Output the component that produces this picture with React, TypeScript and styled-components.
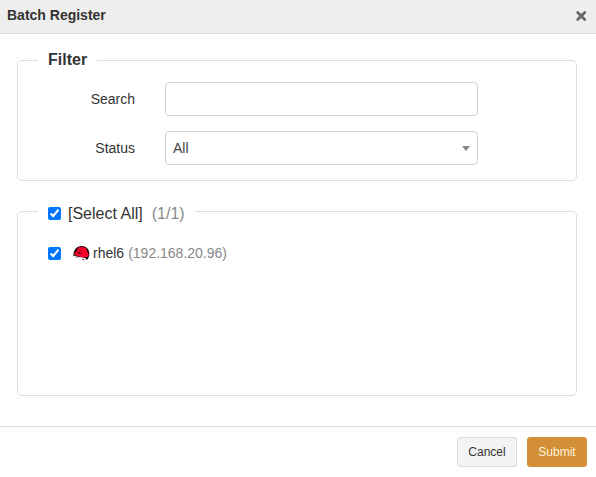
import { useState } from "react";
import styled, { createGlobalStyle } from "styled-components";

const GlobalStyle = createGlobalStyle`
  *, *::before, *::after { box-sizing: border-box; }
  body {
    margin: 0;
    background: #fff;
    color: #333;
    font: 14px/20px "Liberation Sans", Arial, sans-serif;
  }
`;

const Header = styled.header`
  display: flex;
  align-items: center;
  justify-content: space-between;
  height: 34px;
  padding: 0 9px 4px 7px;
  background: #eee;
  border-bottom: 1px solid #ddd;
`;

const Title = styled.h1`
  margin: 0;
  font-size: 14px;
  line-height: 20px;
`;

const CloseButton = styled.button`
  display: flex;
  margin: 2px 0 0;
  padding: 0;
  border: 0;
  background: none;
  color: #666;
  cursor: pointer;
`;

const Body = styled.main`
  display: flex;
  flex-direction: column;
  gap: 18px;
  padding: 16px 19px 30px 17px;
`;

const Panel = styled.fieldset<{ $minHeight?: number }>`
  min-width: 0;
  min-height: ${({ $minHeight }) => ($minHeight ? `${$minHeight}px` : "0")};
  margin: 0;
  padding: 11px 20px 15px;
  border: 1px solid #ddd;
  border-radius: 5px;
`;

const FilterLegend = styled.legend`
  padding: 0 10px 2px;
  font-size: 16px;
  font-weight: bold;
  line-height: 19px;
`;

const SelectLegend = styled.legend`
  display: flex;
  align-items: center;
  padding: 4px 10px 0;
  font-size: 16px;
  line-height: 21px;
`;

const Fields = styled.div`
  display: grid;
  grid-template-columns: 97px 1fr;
  gap: 15px 30px;
  align-items: center;
  margin-right: 78px;
`;

const FieldLabel = styled.label`
  text-align: right;
`;

const TextInput = styled.input`
  width: 100%;
  height: 34px;
  padding: 0 7px;
  border: 1px solid #ccd3dc;
  border-radius: 4px;
  background: #fff;
  color: #444;
  font: inherit;
`;

const SelectBox = styled.div`
  display: grid;
  align-items: center;

  > * { grid-area: 1 / 1; }
`;

const Select = styled.select`
  appearance: none;
  width: 100%;
  height: 34px;
  padding: 0 28px 0 7px;
  border: 1px solid #ccd3dc;
  border-radius: 4px;
  background: #fff;
  color: #444;
  font: inherit;
`;

const Arrow = styled.span`
  justify-self: end;
  margin-right: 8px;
  border: solid transparent;
  border-width: 5px 4px 0;
  border-top-color: #888;
  pointer-events: none;
`;

const CheckLabel = styled.label`
  display: flex;
  align-items: center;
`;

const Checkbox = styled.input`
  width: 13px;
  height: 13px;
  margin: 0 7px 0 0;
`;

const Muted = styled.span`
  color: #888;
`;

const Count = styled(Muted)`
  margin-left: 9px;
`;

const ServerList = styled.ul`
  margin: 8px 0 0;
  padding: 0 10px;
  list-style: none;
`;

const ServerName = styled.span`
  margin: 0 4px 0 3px;
`;

const HatIcon = styled.svg`
  margin-left: 5px;
`;

const Footer = styled.footer`
  display: flex;
  justify-content: flex-end;
  gap: 10px;
  padding: 10px 9px;
  border-top: 1px solid #ddd;
`;

const Button = styled.button<{ $primary?: boolean }>`
  min-width: 60px;
  height: 30px;
  padding: 0 10px;
  border: 1px solid ${({ $primary }) => ($primary ? "#d28f36" : "#ddd")};
  border-radius: 3px;
  background: ${({ $primary }) => ($primary ? "#d28f36" : "#f3f3f3")};
  color: ${({ $primary }) => ($primary ? "#fff3dc" : "#333")};
  font: 12px/18px "Liberation Sans", Arial, sans-serif;
  cursor: pointer;
`;

function RedHat() {
  return (
    <HatIcon width="17" height="16" viewBox="0 0 17 16" aria-hidden="true">
      <path
        d="M.5 11.500C0 5.300 3.400 1 8.600 1c5 0 8.400 4 7.600 8.900-.3 2.200-1.200 3.900-2.500 5.100L12 13Z"
        fill="#160306"
      />
      <path
        d="M1.300 8.400c.2-1.200 1.200-1.500 2-1.900C4 4.300 5 2.200 6.800 2c1 0 1.900.5 2.700.3 1.700-.3 3.500.3 4 1.700l.8 3.300c1.700 1.300 1.500 3.600.2 4.500-1.900 1.200-5.400 1-8-.2C4.200 10.700 1.400 10.200 1.300 8.400Z"
        fill="#fa002c"
      />
      <path d="M3.700 6.700c1.400 1.300 3.300 1.900 4.900 1.800" fill="none" stroke="#22040a" strokeWidth=".9" />
      <path d="M5.500 4.800l3.300.8" fill="none" stroke="#5a0710" strokeWidth=".8" />
      <path d="M.3 11.600 2 10.400c2 1.100 4.100 1.500 6 2.200l3.200.5 1.800.6-.2 1.900H.3Z" fill="#fff" />
      <path d="M2.700 11.800 4.600 12.300M9.200 14.400l2.200.6" fill="none" stroke="#333" strokeWidth=".9" />
    </HatIcon>
  );
}

export default function App() {
  const [search, setSearch] = useState("");
  const [checked, setChecked] = useState(true);
  const toggle = () => setChecked((value) => !value);

  return (
    <>
      <GlobalStyle />
      <Header>
        <Title>Batch Register</Title>
        <CloseButton type="button" aria-label="Close">
          <svg width="12" height="12" viewBox="0 0 12 12" aria-hidden="true">
            <path d="m2.700 2.500 7 7m0-7-7 7" fill="none" stroke="currentColor" strokeWidth="2.800" strokeLinecap="round" />
          </svg>
        </CloseButton>
      </Header>
      <Body>
        <Panel>
          <FilterLegend>Filter</FilterLegend>
          <Fields>
            <FieldLabel htmlFor="search">Search</FieldLabel>
            <TextInput id="search" value={search} onChange={(event) => setSearch(event.target.value)} />
            <FieldLabel htmlFor="status">Status</FieldLabel>
            <SelectBox>
              <Select id="status">
                <option>All</option>
              </Select>
              <Arrow />
            </SelectBox>
          </Fields>
        </Panel>
        <Panel $minHeight={197}>
          <SelectLegend>
            <CheckLabel>
              <Checkbox type="checkbox" checked={checked} onChange={toggle} />
              [Select All]
            </CheckLabel>
            <Count>({checked ? 1 : 0}/1)</Count>
          </SelectLegend>
          <ServerList>
            <li>
              <CheckLabel>
                <Checkbox type="checkbox" checked={checked} onChange={toggle} />
                <RedHat />
                <ServerName>rhel6</ServerName>
                <Muted>(192.168.20.96)</Muted>
              </CheckLabel>
            </li>
          </ServerList>
        </Panel>
      </Body>
      <Footer>
        <Button type="button">Cancel</Button>
        <Button type="button" $primary>Submit</Button>
      </Footer>
    </>
  );
}
